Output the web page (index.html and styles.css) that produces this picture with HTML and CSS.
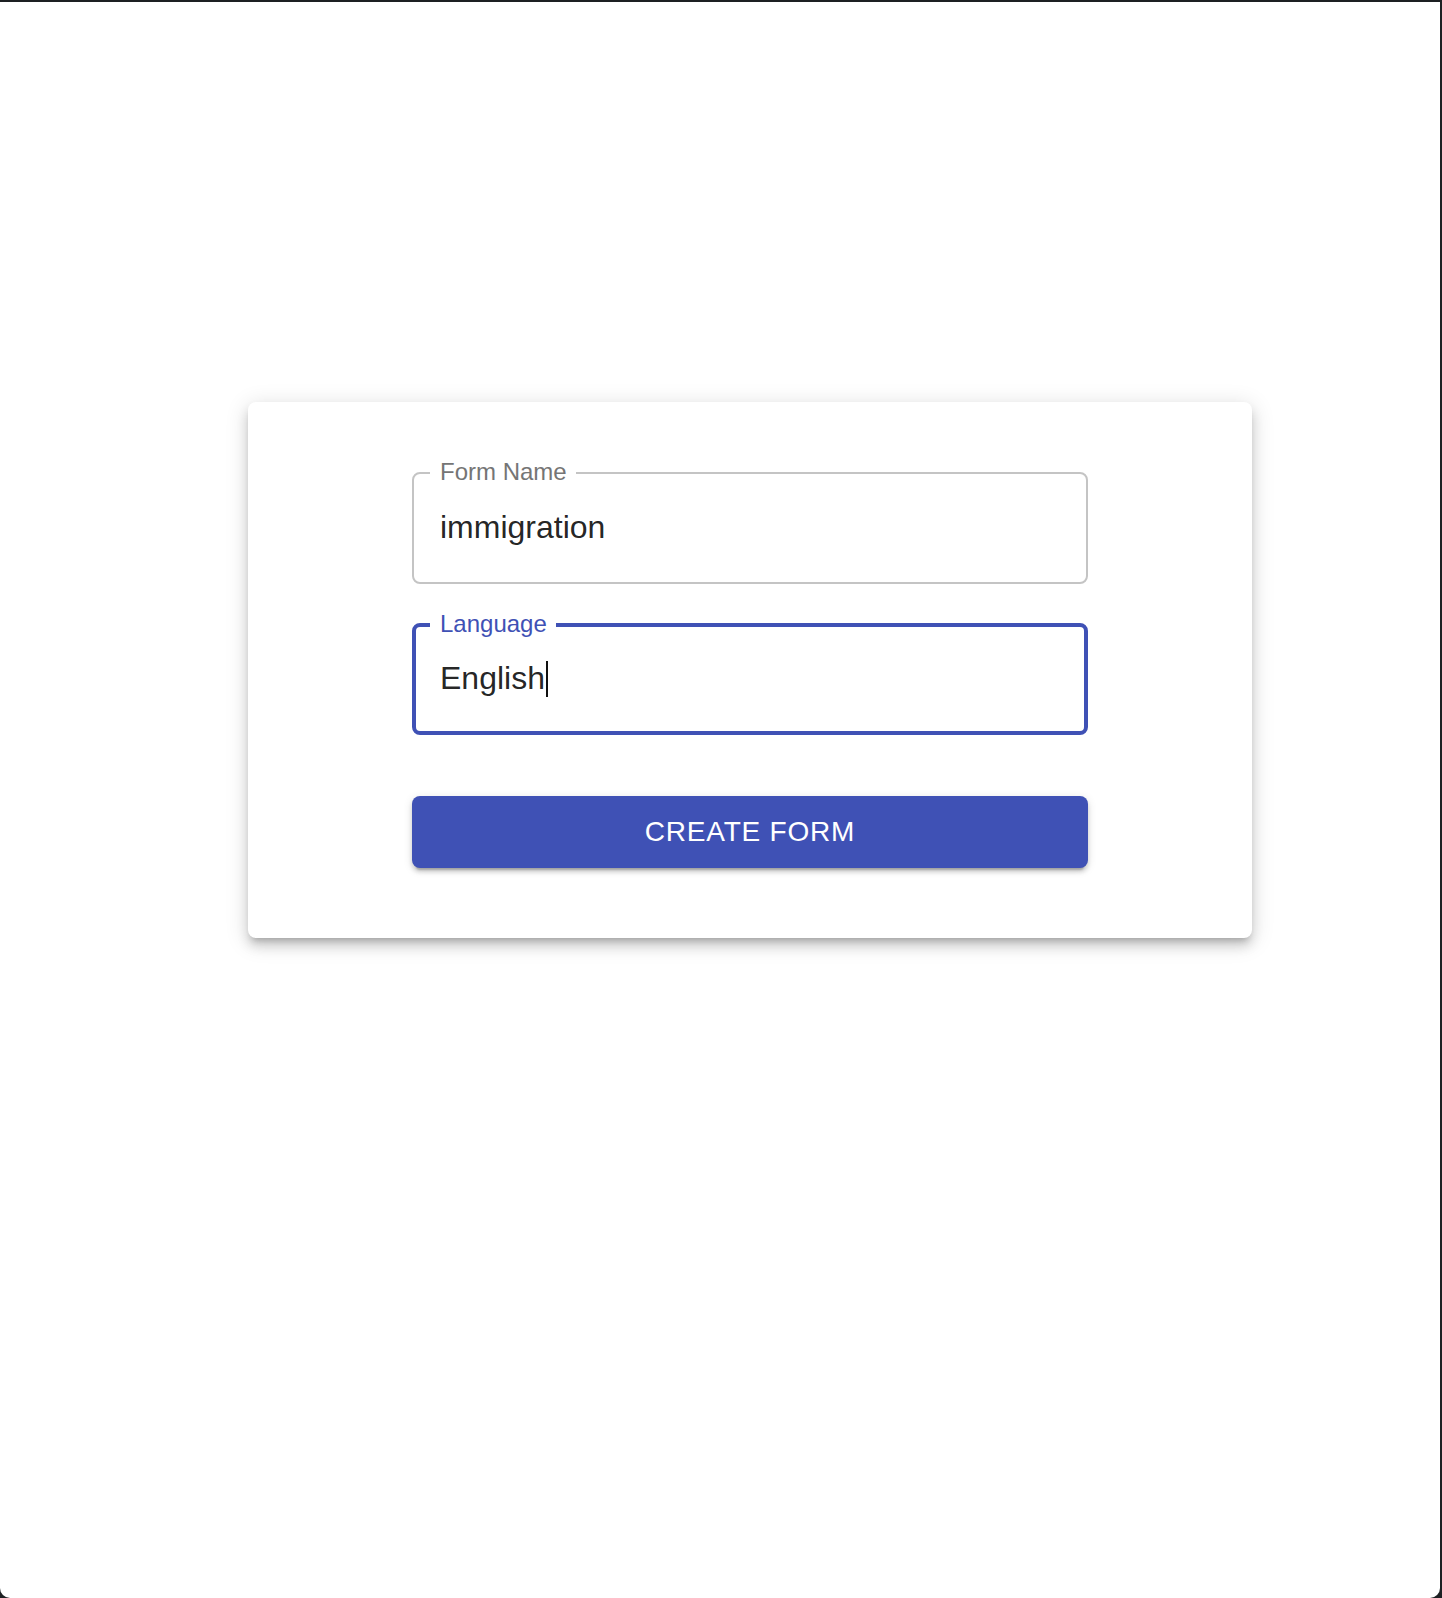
FILE: index.html
```html
<!DOCTYPE html>
<html lang="en">
<head>
    <meta charset="UTF-8">
    <meta name="viewport" content="width=device-width, initial-scale=1.0">
    <title>Create Form</title>
    <link rel="stylesheet" href="styles.css">
</head>
<body>
    <div class="window">
        <div class="form-card">
            <div class="text-field">
                <span class="field-label">Form Name</span>
                <div class="field-value">immigration</div>
            </div>

            <div class="text-field focused">
                <span class="field-label">Language</span>
                <div class="field-value">English<span class="caret"></span></div>
            </div>

            <button class="create-btn">Create Form</button>
        </div>
    </div>
</body>
</html>
```
FILE: styles.css
```css
body {
    font-family: 'Liberation Sans', Arial, sans-serif;
    background: #1d2023;
    margin: 0;
    padding: 0;
}

.window {
    background: #fff;
    height: 1596px;
    margin-top: 2px;
    margin-right: 2px;
    border-radius: 0 0 10px 10px;
    padding: 400px 188px 0 248px;
    box-sizing: border-box;
}

.form-card {
    background: #fff;
    border-radius: 8px;
    box-shadow: 0 6px 6px -4px rgba(0, 0, 0, 0.2),
                0 8px 12px 0 rgba(0, 0, 0, 0.14),
                0 4px 22px 2px rgba(0, 0, 0, 0.12);
    padding: 70px 164px 70px;
    display: flex;
    flex-direction: column;
}

.text-field {
    position: relative;
    height: 112px;
    border: 2px solid #c4c4c4;
    border-radius: 8px;
    box-sizing: border-box;
    padding-left: 26px;
    display: flex;
    align-items: center;
}

.text-field + .text-field {
    margin-top: 39px;
}

.text-field.focused {
    border: 4px solid #3f51b5;
    padding-left: 24px;
}

.field-label {
    position: absolute;
    top: -14px;
    left: 16px;
    padding: 0 9px 0 10px;
    background: #fff;
    font-size: 24px;
    line-height: 24px;
    color: #757575;
}

.focused .field-label {
    top: -15px;
    left: 14px;
    color: #3f51b5;
}

.field-value {
    font-size: 32px;
    color: rgba(0, 0, 0, 0.87);
    display: flex;
    align-items: center;
    margin-top: -2px;
}

.caret {
    display: inline-block;
    width: 2px;
    height: 36px;
    margin-left: 1px;
    margin-top: 2px;
    background: #111;
}

.create-btn {
    margin-top: 61px;
    height: 72px;
    border: none;
    border-radius: 8px;
    background: #3f51b5;
    color: #fff;
    font-family: inherit;
    font-size: 28px;
    letter-spacing: 0.8px;
    text-transform: uppercase;
    cursor: pointer;
    box-shadow: 0 6px 2px -4px rgba(0, 0, 0, 0.2),
                0 4px 4px 0 rgba(0, 0, 0, 0.14),
                0 2px 10px 0 rgba(0, 0, 0, 0.12);
}

.create-btn:hover {
    background: #303f9f;
}
```
